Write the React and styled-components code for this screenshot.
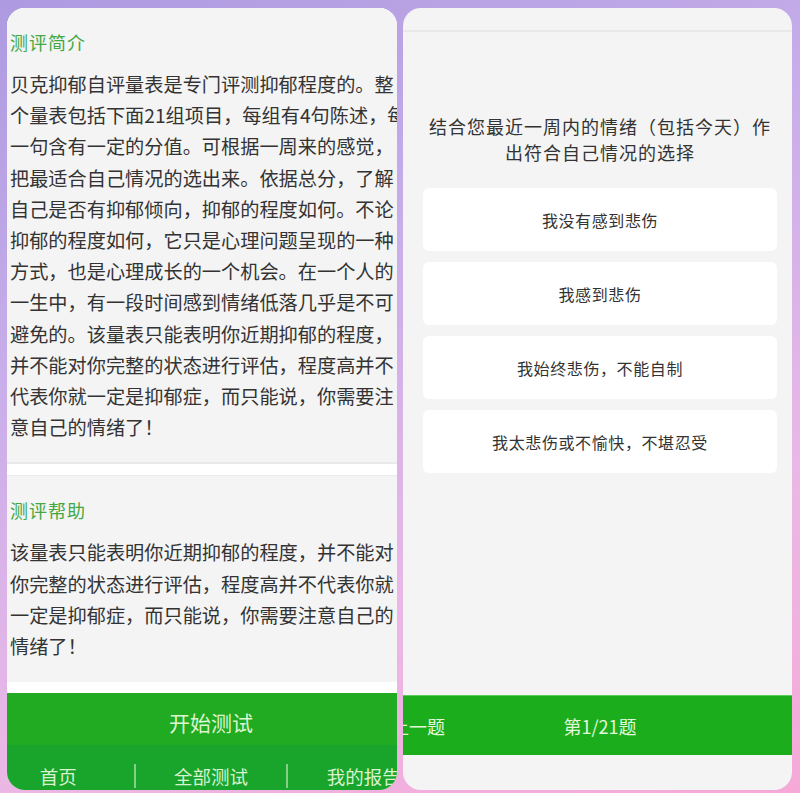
import styled, { createGlobalStyle } from 'styled-components';

const GlobalStyle = createGlobalStyle`
  html, body {
    margin: 0;
    padding: 0;
  }
  body {
    width: 800px;
    height: 793px;
    overflow: hidden;
    background: linear-gradient(160deg, #ad9ae0 0%, #c8aeea 35%, #eab8e6 70%, #f6a9d6 100%);
    font-family: "Noto Sans CJK SC", "Noto Sans", sans-serif;
  }
`;

const Stage = styled.div`
  display: flex;
  gap: 6px;
  padding: 8px 8px 3px 7px;
  height: 793px;
  box-sizing: border-box;
`;

const Phone = styled.div`
  width: ${p => p.$w}px;
  height: 782px;
  flex-shrink: 0;
  border-radius: 18px;
  overflow: hidden;
  background: #f4f4f4;
  display: flex;
  flex-direction: column;
`;

/* left phone: the real screen is wider than the crop */
const Screen = styled.div`
  width: 456px;
  margin-left: -24px;
  height: 100%;
  display: flex;
  flex-direction: column;
`;

const Scroll = styled.div`
  flex: 1;
  overflow: hidden;
  background: #fff;
`;

const Section = styled.section`
  background: #f4f4f4;
  padding: 19px 29px ${p => p.$pb}px 27px;
  border-top: ${p => (p.$top ? '1px solid #ebebeb' : 'none')};
  border-bottom: ${p => (p.$bottom ? '2px solid #e9e9e9' : 'none')};
  margin-bottom: ${p => p.$mb}px;
`;

const SectionTitle = styled.h3`
  margin: 0 0 11px;
  font-size: 18px;
  letter-spacing: 1px;
  font-weight: 400;
  line-height: 31px;
  color: #43a843;
`;

const Body = styled.p`
  margin: 0;
  font-size: 19.2px;
  line-height: 31.2px;
  color: #333;
`;

const StartButton = styled.div`
  height: 52px;
  box-sizing: border-box;
  padding-top: 5px;
  background: #21ab22;
  color: #dcf6d2;
  font-size: 21px;
  display: flex;
  align-items: center;
  justify-content: center;
`;

const Nav = styled.nav`
  height: 45px;
  box-sizing: border-box;
  padding-top: 19px;
  background: #19a42b;
  display: flex;
  align-items: flex-start;
`;

const NavItem = styled.div`
  flex: 1;
  height: 24px;
  line-height: 24px;
  text-align: center;
  font-size: 18.5px;
  color: #d8f3cf;
  & + & {
    border-left: 2px solid rgba(220, 246, 210, 0.55);
  }
`;

/* right phone */
const StatusBar = styled.div`
  height: 22px;
  border-bottom: 2px solid #e9e9e9;
`;

const QuizBody = styled.div`
  flex: 1;
  padding: 81px 15px 0 20px;
`;

const Question = styled.div`
  font-size: 18px;
  letter-spacing: 1px;
  line-height: 26px;
  text-align: center;
  color: #333;
  margin-bottom: 23px;
`;

const Options = styled.div`
  display: flex;
  flex-direction: column;
  gap: 11px;
`;

const Option = styled.div`
  height: 63px;
  background: #fff;
  border-radius: 6px;
  display: flex;
  align-items: center;
  justify-content: center;
  font-size: 16px;
  letter-spacing: 0.6px;
  color: #333;
`;

const PagerBar = styled.div`
  height: 60px;
  background: #1cad1d;
  border-top: 1px solid #58cc58;
  box-sizing: border-box;
  display: grid;
  grid-template-columns: 1fr auto 1fr;
  align-items: center;
  color: #e2f8da;
  font-size: 18px;
`;

const PrevBtn = styled.span`
  justify-self: start;
  margin-left: -12px;
`;

const PageNo = styled.span`
  padding-left: 5px;
`;

const Footer = styled.div`
  height: 35px;
`;

const options = ['我没有感到悲伤', '我感到悲伤', '我始终悲伤，不能自制', '我太悲伤或不愉快，不堪忍受'];

export default function App() {
  return (
    <>
      <GlobalStyle />
      <Stage>
        <Phone $w={390}>
          <Screen>
            <Scroll>
              <Section $pb={19} $bottom $mb={11}>
                <SectionTitle>测评简介</SectionTitle>
                <Body>
                  贝克抑郁自评量表是专门评测抑郁程度的。整个量表包括下面21组项目，每组有4句陈述，每一句含有一定的分值。可根据一周来的感觉，把最适合自己情况的选出来。依据总分，了解自己是否有抑郁倾向，抑郁的程度如何。不论抑郁的程度如何，它只是心理问题呈现的一种方式，也是心理成长的一个机会。在一个人的一生中，有一段时间感到情绪低落几乎是不可避免的。该量表只能表明你近期抑郁的程度，并不能对你完整的状态进行评估，程度高并不代表你就一定是抑郁症，而只能说，你需要注意自己的情绪了！
                </Body>
              </Section>
              <Section $pb={20} $top $mb={10}>
                <SectionTitle>测评帮助</SectionTitle>
                <Body>
                  该量表只能表明你近期抑郁的程度，并不能对你完整的状态进行评估，程度高并不代表你就一定是抑郁症，而只能说，你需要注意自己的情绪了！
                </Body>
              </Section>
            </Scroll>
            <StartButton>开始测试</StartButton>
            <Nav>
              <NavItem>首页</NavItem>
              <NavItem>全部测试</NavItem>
              <NavItem>我的报告</NavItem>
            </Nav>
          </Screen>
        </Phone>
        <Phone $w={389}>
          <StatusBar />
          <QuizBody>
            <Question>结合您最近一周内的情绪（包括今天）作出符合自己情况的选择</Question>
            <Options>
              {options.map(o => (
                <Option key={o}>{o}</Option>
              ))}
            </Options>
          </QuizBody>
          <PagerBar>
            <PrevBtn>上一题</PrevBtn>
            <PageNo>第1/21题</PageNo>
            <span />
          </PagerBar>
          <Footer />
        </Phone>
      </Stage>
    </>
  );
}
